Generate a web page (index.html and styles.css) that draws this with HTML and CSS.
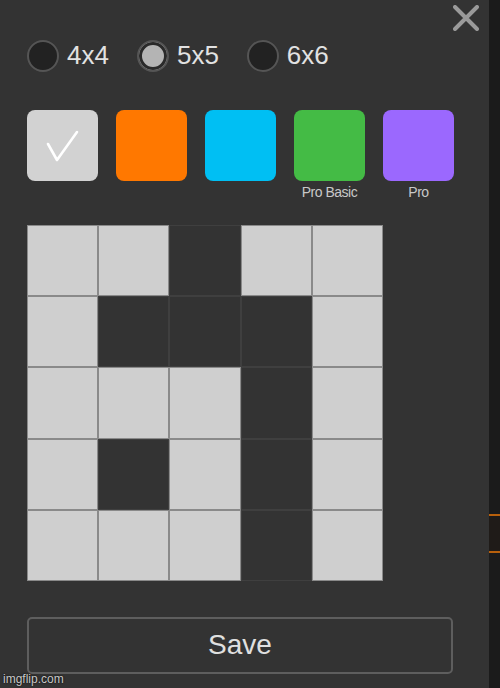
FILE: index.html
```html
<!DOCTYPE html>
<html>
<head>
<meta charset="utf-8">
<link rel="stylesheet" href="styles.css">
</head>
<body>
<div class="page">
  <div class="panel">
    <button class="close" aria-label="Close">
      <svg width="26" height="26" viewBox="0 0 26 26"><path d="M2 2 L24 24 M24 2 L2 24" stroke="#9a9a9a" stroke-width="4" stroke-linecap="round"/></svg>
    </button>
    <div class="sizes">
      <label class="opt"><span class="radio"></span><span>4x4</span></label>
      <label class="opt"><span class="radio on"></span><span>5x5</span></label>
      <label class="opt"><span class="radio"></span><span>6x6</span></label>
    </div>
    <div class="swatches">
      <div class="sw"><div class="chip c-white"><svg width="71" height="71" viewBox="0 0 71 71"><path d="M21 34 L30 50 L50 22" fill="none" stroke="#fff" stroke-width="2.6" stroke-linecap="round" stroke-linejoin="round"/></svg></div></div>
      <div class="sw"><div class="chip c-orange"></div></div>
      <div class="sw"><div class="chip c-blue"></div></div>
      <div class="sw"><div class="chip c-green"></div><span class="tag">Pro Basic</span></div>
      <div class="sw"><div class="chip c-purple"></div><span class="tag">Pro</span></div>
    </div>
    <div class="grid">
      <div class="cell l"></div><div class="cell l"></div><div class="cell d"></div><div class="cell l"></div><div class="cell l"></div>
      <div class="cell l"></div><div class="cell d"></div><div class="cell d"></div><div class="cell d"></div><div class="cell l"></div>
      <div class="cell l"></div><div class="cell l"></div><div class="cell l"></div><div class="cell d"></div><div class="cell l"></div>
      <div class="cell l"></div><div class="cell d"></div><div class="cell l"></div><div class="cell d"></div><div class="cell l"></div>
      <div class="cell l"></div><div class="cell l"></div><div class="cell l"></div><div class="cell d"></div><div class="cell l"></div>
    </div>
    <button class="save">Save</button>
    <span class="mark">imgflip.com</span>
  </div>
  <div class="strip"><div class="bar"></div></div>
</div>
</body>
</html>
```
FILE: styles.css
```css
html, body {
  margin: 0;
  padding: 0;
  background: #333333;
}
.page {
  display: flex;
  width: 500px;
  height: 688px;
  overflow: hidden;
  font-family: "Liberation Sans", Arial, sans-serif;
}
.panel {
  position: relative;
  width: 489px;
  flex: none;
  background: #333333;
  padding: 0 0 0 27px;
  box-sizing: border-box;
  display: flex;
  flex-direction: column;
}
.strip {
  flex: 1;
  background: #1b1b1b;
  padding-top: 514px;
}
.bar {
  height: 35px;
  border-top: 2px solid #b8600c;
  border-bottom: 2px solid #b8600c;
  background: #1f1b18;
}
.close {
  position: absolute;
  top: 5px;
  right: 10px;
  background: none;
  border: 0;
  padding: 0;
  width: 26px;
  height: 26px;
  cursor: pointer;
}
.close svg { display: block; }
.sizes {
  display: flex;
  align-items: center;
  margin-top: 39px;
  height: 33px;
}
.opt {
  display: flex;
  align-items: center;
  gap: 8px;
  margin-right: 28px;
  color: #e2e2e2;
  font-size: 26px;
}
.radio {
  width: 28px;
  height: 28px;
  border-radius: 50%;
  border: 2px solid #555555;
  background: #222222;
  box-sizing: content-box;
}
.radio.on {
  background: #b4b4b4;
  box-shadow: inset 0 0 0 3px #2a2a2a;
}
.swatches {
  display: flex;
  gap: 18px;
  margin-top: 38px;
  height: 113px;
}
.sw {
  width: 71px;
  display: flex;
  flex-direction: column;
  align-items: center;
}
.chip {
  width: 71px;
  height: 71px;
  border-radius: 8px;
}
.chip svg { display: block; }
.c-white { background: #d2d2d2; }
.c-orange { background: #ff7800; }
.c-blue { background: #00bff3; }
.c-green { background: #44bb45; }
.c-purple { background: #9b68fe; }
.tag {
  margin-top: 3px;
  font-size: 14px;
  letter-spacing: -0.5px;
  color: #c8c8c8;
  font-family: "Liberation Sans", Arial, sans-serif;
}
.grid {
  display: grid;
  grid-template-columns: repeat(5, 71.2px);
  grid-template-rows: repeat(5, 71.2px);
  width: 356px;
  margin-top: 2px;
}
.cell {
  box-sizing: border-box;
  border: 1px solid;
}
.cell.l {
  background: #cfcfcf;
  border-color: #8a8a8a;
}
.cell.d {
  background: #333333;
  border-color: #3f3f3f;
}
.save {
  margin-top: 36px;
  width: 426px;
  height: 57px;
  background: #333333;
  border: 2px solid #5e5e5e;
  border-radius: 5px;
  color: #e0e0e0;
  font-family: "Liberation Sans", Arial, sans-serif;
  font-size: 28px;
  padding: 0;
  cursor: pointer;
}
.mark {
  position: absolute;
  left: 3px;
  bottom: 2px;
  font-size: 12px;
  color: #c8c8c8;
  text-shadow: 0 0 2px #000;
}
```
